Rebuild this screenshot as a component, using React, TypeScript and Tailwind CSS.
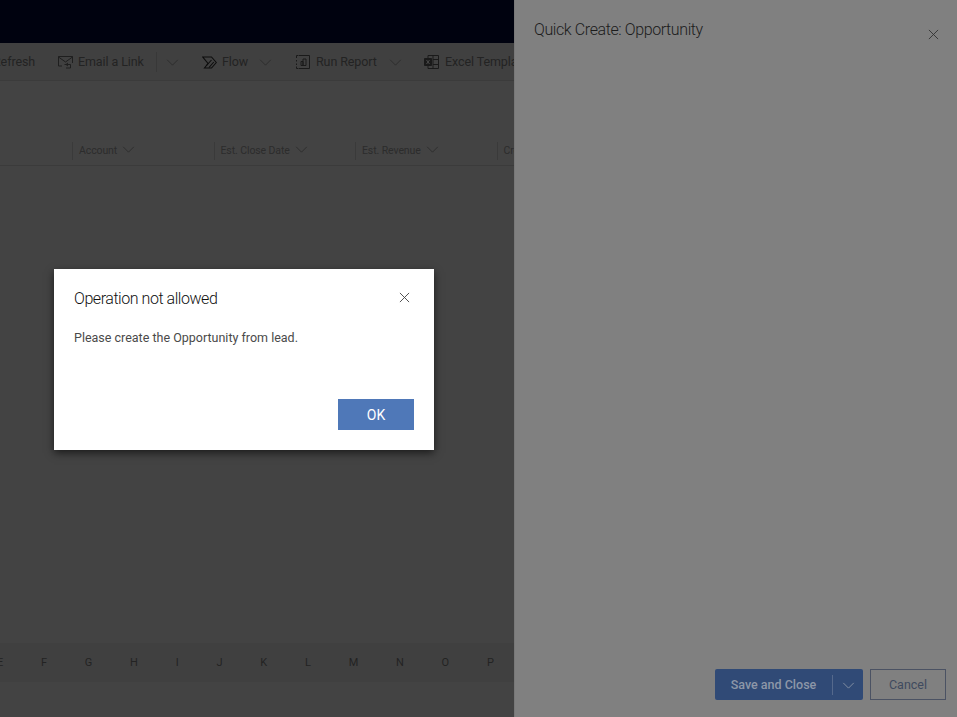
import React from "react";

const Chevron = ({ className = "" }: { className?: string }) => (
  <svg viewBox="0 0 14 8" className={`h-[7px] w-[13px] ${className}`} fill="none" stroke="currentColor" strokeWidth="1">
    <path d="M1 1l6 6 6-6" />
  </svg>
);

const Close = ({ size, className = "" }: { size: number; className?: string }) => (
  <svg viewBox="0 0 12 12" width={size} height={size} className={className} fill="none" stroke="currentColor" strokeWidth="1">
    <path d="M1 1l10 10M11 1L1 11" />
  </svg>
);

const MailIcon = () => (
  <svg viewBox="0 0 15 14" className="h-[14px] w-[15px]" fill="none" stroke="#1f1f1f" strokeWidth="1">
    <path d="M4 11H.5V1.500h14V8" />
    <path d="M.5 2L7.500 7l7-5" />
    <path d="M6.500 9.500h6v3.500H8" />
    <path d="M10 8L8 9.500 10 11" />
  </svg>
);

const FlowIcon = () => (
  <svg viewBox="0 0 15 13" className="h-[13px] w-[15px]" fill="none" stroke="#0d0d0d" strokeWidth="1.100">
    <path d="M.8 1h8.700l4.800 5.500-4.800 5.500H2.500l3.500-4.500L.8 1z" />
    <path d="M4.500 9.500L9.500 4M7 11.500l4.800-5.500" />
  </svg>
);

const ReportIcon = () => (
  <svg viewBox="0 0 14 14" className="h-[14px] w-[14px]" fill="none" stroke="#1a1a1a" strokeWidth="1">
    <path d="M2.500 .5h11v13h-11" />
    <path d="M2 .5H.5v2.500M.5 5v1.500M.5 8.500V10M.5 11.500v2H2" />
    <path d="M5 10.500V6.500h2v4zM7 10.500V4h3v6.500z" />
  </svg>
);

const ExcelIcon = () => (
  <svg viewBox="0 0 15 14" className="h-[14px] w-[15px]" fill="none" stroke="#1a1a1a" strokeWidth="1">
    <path d="M4 3V.5h10.500v13H4V11" />
    <path d="M9 .5v13M9 4.500h5.500M9 9.500h5.500" />
    <path d="M.5 3.500h7v7h-7z" fill="#1a1a1a" />
    <path d="M2.500 5l3 4M5.500 5l-3 4" stroke="#4a4a4a" />
  </svg>
);

const columns = ["Account", "Est. Close Date", "Est. Revenue"];
const letters = ["E", "F", "G", "H", "I", "J", "K", "L", "M", "N", "O", "P"];

export default function App() {
  return (
    <div className="relative flex h-[717px] w-[957px] overflow-hidden bg-[#434343] font-['Roboto','Noto_Sans',sans-serif]">
      <div className="flex w-[514px] shrink-0 flex-col overflow-hidden">
        <div className="h-[43px] shrink-0 bg-[#00020f]" />

        <div className="flex h-[38px] shrink-0 items-center whitespace-nowrap border-b border-[#3b3b3b] bg-[#404040] pt-px text-[12.500px] tracking-[-0.100px] text-[#232323]">
          <span className="ml-[-7px] w-[43px] shrink-0">Refresh</span>
          <span className="ml-[22px] flex shrink-0 items-center gap-[5px]">
            <MailIcon />
            <span className="w-[67px]">Email a Link</span>
          </span>
          <span className="ml-[11px] h-[20px] w-px shrink-0 bg-[#383838]" />
          <Chevron className="ml-[9px] shrink-0 text-[#2a2a2a]" />
          <span className="ml-[23px] flex shrink-0 items-center gap-[5px]">
            <FlowIcon />
            <span className="w-[25px]">Flow</span>
          </span>
          <Chevron className="ml-[12px] shrink-0 text-[#2a2a2a]" />
          <span className="ml-[24px] flex shrink-0 items-center gap-[6px]">
            <ReportIcon />
            <span className="w-[63px]">Run Report</span>
          </span>
          <Chevron className="ml-[10px] shrink-0 text-[#2a2a2a]" />
          <span className="ml-[22px] flex shrink-0 items-center gap-[6px]">
            <ExcelIcon />
            <span>Excel Template</span>
          </span>
        </div>

        <div className="mt-[56px] flex h-[29px] shrink-0 items-center whitespace-nowrap border-b border-[#3b3b3b] pl-[72px] text-[10.500px] tracking-[-0.100px] text-[#2c2c2c]">
          {columns.map((c) => (
            <div key={c} className="flex h-[18px] w-[141.500px] shrink-0 items-center gap-[5px] border-l border-[#3a3a3a] pl-[6px]">
              <span>{c}</span>
              <Chevron className="mb-[3px] text-[#2c2c2c]" />
            </div>
          ))}
          <div className="flex h-[18px] shrink-0 items-center border-l border-[#3a3a3a] pl-[6px]">Created</div>
        </div>

        <div className="flex-1" />

        <div className="mb-[35px] flex h-[39px] shrink-0 items-center bg-[#404040] pt-[2px] text-[11px] text-[#232323]">
          <div className="ml-[-3px] flex shrink-0 gap-[37.750px]">
            {letters.map((l) => (
              <span key={l} className="shrink-0">{l}</span>
            ))}
          </div>
        </div>
      </div>

      <div className="flex min-w-0 flex-1 flex-col border-l border-[#787878] bg-[#808080]">
        <div className="flex items-start justify-between pl-[19px] pr-[18px]">
          <h1 className="mt-[19px] text-[16px] font-light leading-[22px] tracking-[-0.400px] text-[#1c1c1c]">Quick Create: Opportunity</h1>
          <Close size={11} className="mt-[29px] text-[#333333]" />
        </div>
        <div className="flex-1" />
        <div className="mb-[17px] flex justify-end gap-[7px] pr-[11px]">
          <div className="flex h-[31px] overflow-hidden rounded-[2px] bg-[#304a76] pt-px text-[#8d97a8]">
            <span className="flex w-[117px] items-center justify-center text-[12.500px] font-medium">Save and Close</span>
            <span className="my-[5px] w-px bg-[#55698c]" />
            <span className="flex w-[30px] items-center justify-center"><Chevron /></span>
          </div>
          <div className="flex h-[31px] w-[76px] items-center justify-center border border-[#4b5263] pt-px text-[12.500px] text-[#3f4a5e]">Cancel</div>
        </div>
      </div>

      <div className="absolute left-[54px] top-[269px] flex h-[181px] w-[380px] flex-col bg-white shadow-[0_3px_8px_rgba(0,0,0,0.6)]">
        <div className="flex items-start justify-between pl-[20px] pr-[24px]">
          <h2 className="mt-[19px] text-[16px] font-light leading-[22px] tracking-[-0.450px] text-[#111111]">Operation not allowed</h2>
          <Close size={11} className="mt-[23px] text-[#444444]" />
        </div>
        <p className="ml-[20px] mt-[19px] text-[12.500px] leading-[18px] text-[#4a4a4a]">Please create the Opportunity from lead.</p>
        <div className="flex-1" />
        <div className="mb-[20px] flex justify-end pr-[20px]">
          <div className="flex h-[31px] w-[76px] items-center justify-center bg-[#4f78b8] pt-px text-[14px] font-normal text-white">OK</div>
        </div>
      </div>
    </div>
  );
}
